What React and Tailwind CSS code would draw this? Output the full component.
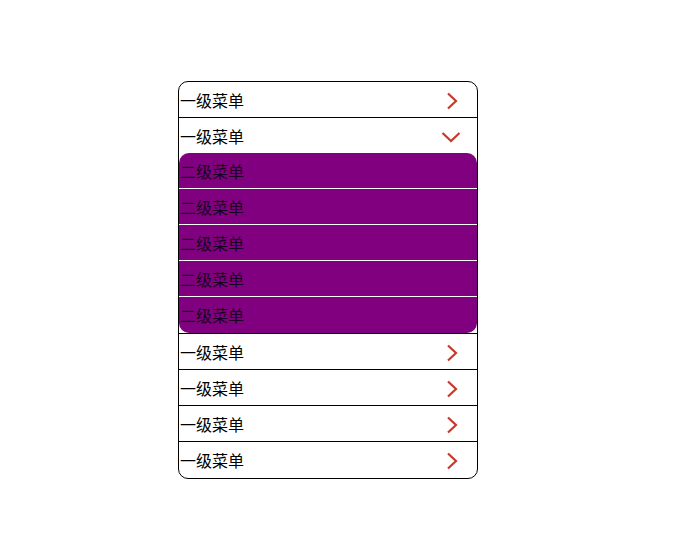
import { useState } from 'react';

const ChevronRight = () => (
  <svg width="14" height="18" viewBox="0 0 14 18" fill="none">
    <path d="M3 1.5 L11 9 L3 16.5" stroke="#c8382a" strokeWidth="2.2" />
  </svg>
);

const ChevronDown = () => (
  <svg width="20" height="12" viewBox="0 0 20 12" fill="none">
    <path d="M1.5 2 L10 10 L18.5 2" stroke="#c8382a" strokeWidth="2.2" />
  </svg>
);

const App = () => {
  const [open, setOpen] = useState(1);
  const menus = [0, 1, 2, 3, 4, 5];

  return (
    <div className="w-[684px] h-[535px] bg-white pt-[81px] pl-[178px]" style={{ fontFamily: '"Noto Sans CJK SC", "Noto Sans", sans-serif' }}>
      <div className="w-[300px] border border-black rounded-[10px] text-[16px] text-black">
        {menus.map((m, i) => (
          <div key={m} className={i < menus.length - 1 ? 'border-b border-black' : ''}>
            {/* first-level item */}
            <div
              className={`${i === menus.length - 1 ? 'h-[36px]' : 'h-[35px]'} flex items-center justify-between pl-[1px] pr-[18px] cursor-pointer`}
              onClick={() => setOpen(open === m ? -1 : m)}
            >
              <span className="leading-none">一级菜单</span>
              {open === m ? (
                <span className="mr-[-2px] mt-[2px]"><ChevronDown /></span>
              ) : (
                <span className="mt-[2px]"><ChevronRight /></span>
              )}
            </div>

            {/* second-level items */}
            {open === m && (
              <div className="bg-[#800080] rounded-[10px] overflow-hidden">
                {[0, 1, 2, 3, 4].map(s => (
                  <div
                    key={s}
                    className={`flex items-center pl-[1px] text-[#1a0020] ${s < 4 ? 'h-[36px] border-b border-white' : 'h-[36px]'}`}
                  >
                    <span className="leading-none">二级菜单</span>
                  </div>
                ))}
              </div>
            )}
          </div>
        ))}
      </div>
    </div>
  );
};

export default App;
